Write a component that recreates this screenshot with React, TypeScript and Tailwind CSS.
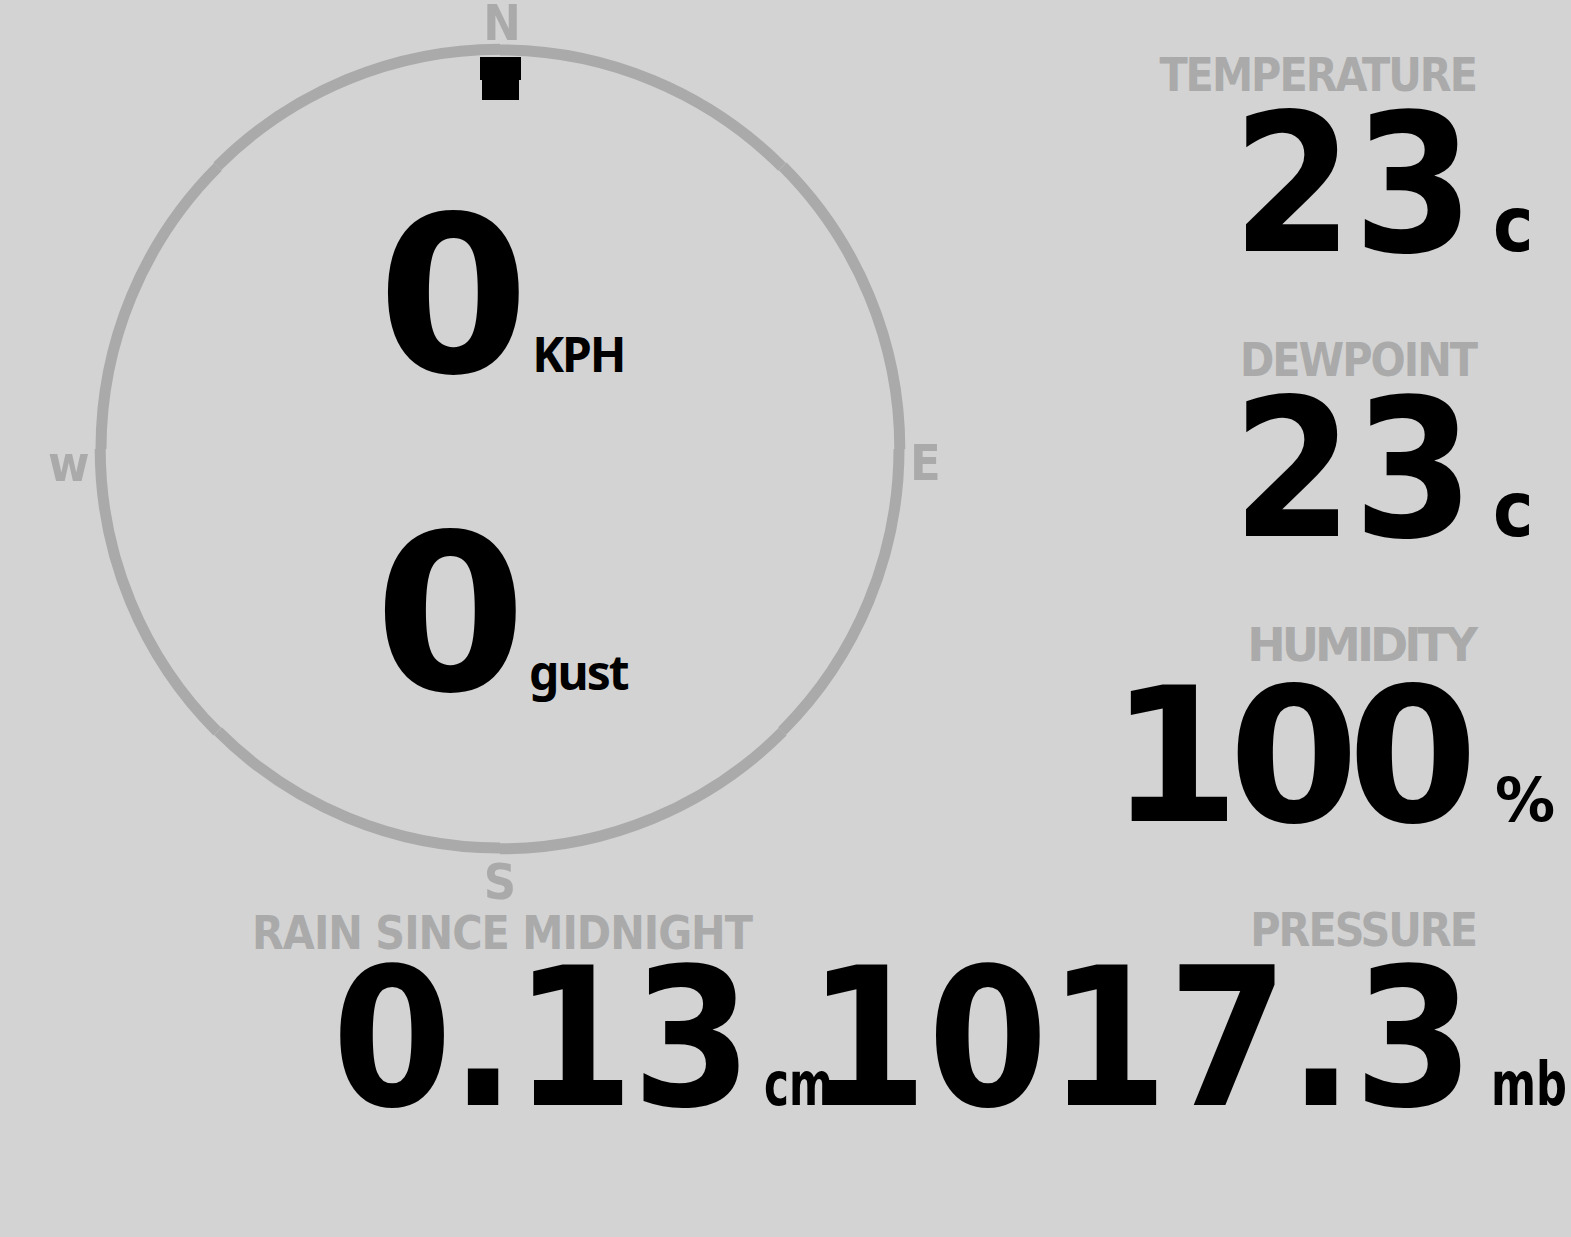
import React from 'react'

const CX = 500
const CY = 449

// ring drawn as eight arcs, like the original gauge
const arcs = Array.from({ length: 8 }, (_, i) => {
  const r = i % 2 === 0 ? 399 : 399.8
  const a0 = -Math.PI / 2 + (i * Math.PI) / 4
  const a1 = a0 + Math.PI / 4
  const x0 = CX + r * Math.cos(a0)
  const y0 = CY + r * Math.sin(a0)
  const x1 = CX + r * Math.cos(a1)
  const y1 = CY + r * Math.sin(a1)
  return `M ${x0.toFixed(1)} ${y0.toFixed(1)} A ${r} ${r} 0 0 1 ${x1.toFixed(1)} ${y1.toFixed(1)}`
})

function Compass() {
  return (
    <div className="relative h-[910px]">
      <svg className="absolute inset-0" width="1000" height="910" viewBox="0 0 1000 910">
        {arcs.map((d, i) => (
          <path key={i} d={d} fill="none" stroke="#aaaaaa" strokeWidth="11" />
        ))}
        <polygon points="480,57 521,57 521,80 519,80 519,100 482,100 482,80 480,80" fill="#000" />
        <g className="font-['DejaVu_Sans_Condensed','DejaVu_Sans',sans-serif] font-bold" fill="#aaaaaa" fontSize="50">
          <text x="502" y="40" textAnchor="middle">N</text>
          <text x="500" y="899" textAnchor="middle">S</text>
          <text x="910" y="480">E</text>
          <text x="48" y="481">w</text>
        </g>
      </svg>
      <div className="relative flex flex-col items-center pt-[188px] gap-[100px] leading-none">
        <div className="flex items-baseline gap-[3px] pl-[2px]">
          <span className="text-[218px] font-bold font-['DejaVu_Sans',sans-serif]">0</span>
          <span className="text-[48px] tracking-[-2px] font-bold font-['Noto_Sans',sans-serif]">KPH</span>
        </div>
        <div className="flex items-baseline gap-[3px] pl-[2px]">
          <span className="text-[218px] font-bold font-['DejaVu_Sans',sans-serif]">0</span>
          <span className="text-[48px] tracking-[-2px] font-bold font-['Noto_Sans',sans-serif]">gust</span>
        </div>
      </div>
    </div>
  )
}

function Reading({
  label,
  value,
  unit,
  labelClass,
  valueClass,
  numberClass,
  unitClass,
  rowClass,
}: {
  label: string
  value: string
  unit: string
  labelClass: string
  valueClass: string
  numberClass?: string
  unitClass: string
  rowClass: string
}) {
  return (
    <div className={rowClass}>
      <div className={labelClass}>{label}</div>
      <div className={valueClass}>
        <span className={numberClass}>{value}</span>
        <span className="w-0 whitespace-nowrap">
          <span className={unitClass}>{unit}</span>
        </span>
      </div>
    </div>
  )
}

const labelDin =
  "-mr-[2px] text-[46px] tracking-[-2px] leading-none text-[#aaaaaa] font-bold font-['DejaVu_Sans_Condensed','DejaVu_Sans',sans-serif] whitespace-nowrap"

const bigDin =
  "-mt-[10px] flex items-baseline leading-none font-bold font-['DejaVu_Sans_Condensed','DejaVu_Sans',sans-serif] whitespace-nowrap"

export default function App() {
  return (
    <div className="h-screen w-full overflow-hidden bg-[#d3d3d3] text-black">
      <div className="flex">
        <div className="w-[1000px] shrink-0 flex flex-col">
          <Compass />
          <div className="flex flex-col items-start pl-[252px]">
            <div className="text-[46px] tracking-[-1px] leading-none text-[#aaaaaa] font-bold font-['DejaVu_Sans_Condensed','DejaVu_Sans',sans-serif] whitespace-nowrap">
              RAIN SINCE MIDNIGHT
            </div>
            <div className="-mt-[13px] ml-[80px] flex items-baseline leading-none font-bold font-['DejaVu_Sans_Condensed','DejaVu_Sans',sans-serif] whitespace-nowrap">
              <span className="text-[192px] tracking-[-2px]">0.13</span>
              <span className="w-0 whitespace-nowrap">
                <span className="ml-[14px] inline-block origin-left scale-x-[0.78] text-[60px]">cm</span>
              </span>
            </div>
          </div>
        </div>

        <div className="flex-1 min-w-0 flex flex-col items-end pr-[97px] pt-[52px]">
          <Reading
            rowClass="h-[285px] flex flex-col items-end"
            label="TEMPERATURE"
            labelClass={labelDin}
            value="23"
            valueClass={`${bigDin} text-[193px]`}
            unit="c"
            unitClass="ml-[19px] text-[76px]"
          />
          <Reading
            rowClass="h-[285px] flex flex-col items-end"
            label="DEWPOINT"
            labelClass={labelDin}
            value="23"
            valueClass={`${bigDin} text-[193px]`}
            unit="c"
            unitClass="ml-[19px] text-[76px]"
          />
          <Reading
            rowClass="h-[285px] flex flex-col items-end"
            label="HUMIDITY"
            labelClass="text-[46px] tracking-[-4px] leading-none text-[#aaaaaa] font-bold font-['DejaVu_Sans',sans-serif] whitespace-nowrap"
            value="100"
            valueClass="-mt-[5px] mr-[7px] flex items-baseline leading-none text-[187px] font-bold font-['DejaVu_Sans',sans-serif] whitespace-nowrap"
            numberClass="tracking-[-11px]"
            unit="%"
            unitClass="ml-[28px] text-[60px]"
          />
          <Reading
            rowClass="flex flex-col items-end"
            label="PRESSURE"
            labelClass={labelDin}
            value="1017.3"
            valueClass={`${bigDin} text-[192px]`}
            unit="mb"
            unitClass="ml-[17px] inline-block origin-left scale-x-[0.8] text-[60px]"
          />
        </div>
      </div>
    </div>
  )
}
